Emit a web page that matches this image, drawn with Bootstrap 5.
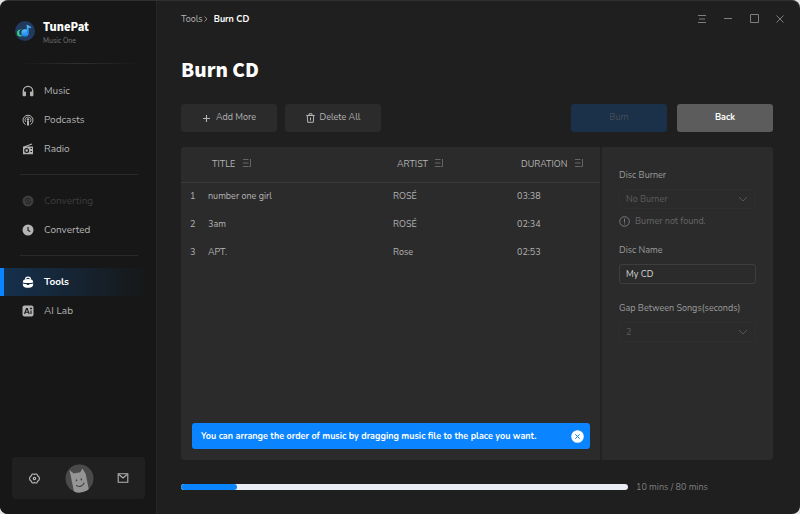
<!DOCTYPE html>
<html lang="en" data-bs-theme="dark">
<head>
<meta charset="utf-8">
<meta name="viewport" content="width=device-width, initial-scale=1">
<title>TunePat Music One</title>
<link rel="stylesheet" href="https://cdn.jsdelivr.net/npm/bootstrap@5.3.0/dist/css/bootstrap.min.css">
<style>
html { background: #e4e4e4; }
body { font-family: "Nunito", "Lato", sans-serif; font-size: 10px; line-height: 16px; color: #b4b4b4; background: transparent; }
.display-face { font-family: "Source Sans Pro", "Noto Sans CJK JP", sans-serif; font-weight: 900; color: #fff; }
.app-window { background: #1f1f1f; border-radius: 8px; overflow: hidden; border-top: 1px solid #303030; }
.side { width: 157px; background: #171717; border-right: 1px solid #262626; }
.brand { padding: 18px 14px 0; height: 62px; gap: 7px; }
.brand-title { font-size: 11px; line-height: 14px; }
.brand-sub { font-size: 7px; line-height: 16px; color: #757575; }
.rule { height: 1px; background: #2a2a2a; margin: 0 18px 0 20px; }
.rule-fade { background: linear-gradient(90deg, #171717, #303030 50%, #171717); }
.menu { gap: 1px; padding: 12px 0 11px; }
.menu-main { padding-top: 13px; }
.menu-link { height: 28px; padding-left: 22px; gap: 10px; color: #b4b4b4; text-decoration: none; }
.menu-link svg { width: 12px; height: 12px; }
.menu-link.off { color: #3d3d3d; }
.menu-link.on { color: #fff; font-weight: 700; background: linear-gradient(90deg, #15304d, #171717 95%); border-left: 4px solid #0a84ff; padding-left: 18px; }
.user-bar { background: #202020; border-radius: 4px; margin: 0 11px 15px 12px; padding: 6px 16px; height: 42px; }
.icon-btn { background: none; border: 0; padding: 0; color: inherit; display: inline-flex; align-items: center; justify-content: center; }
.main-area { font-size: 9px; padding: 10px 27px 19px 24px; min-width: 0; }
.crumbs a { color: #b4b4b4; }
.crumbs svg { margin: 0 6px 0 1px; }
.win-tools { gap: 14px; color: #7e7e7e; margin-right: -13px; }
.win-tools .icon-btn { width: 12px; height: 12px; }
.page-title { font-size: 19px; line-height: 28px; margin: 28px 0 21px; }
.act { width: 96px; height: 28px; padding: 0; border: 0; border-radius: 3px; font-size: 9px; color: #b4b4b4; background: #2b2b2b; gap: 5px; }
.act-burn, .act-burn:disabled { background: #1b3049; color: #484e55; opacity: 1; }
.act-back { background: #5c5c5c; color: #fff; font-weight: 700; margin-left: 10px; }
.panel { background: #2b2b2b; border-radius: 3px; margin-top: 15px; }
.song-side { border-right: 2px solid #222; min-width: 0; }
.songs { table-layout: fixed; width: 100%; }
.songs th { height: 35px; padding: 0 0 0 4px; font-weight: 400; border-bottom: 1px solid #3a3a3a; white-space: nowrap; }
.songs td { height: 28px; padding: 0; }
.songs td:first-child { padding-left: 9px; }
.songs svg { margin-left: 4px; vertical-align: -1px; }
.c-num { width: 27px; } .c-art { width: 124px; } .c-dur { width: 83px; }
.tip { background: #0a84ff; color: #fff; border-radius: 3px; margin: 0 10px 11px 11px; padding: 0 6px 0 9px; height: 26px; font-weight: 700; }
.opts { width: 171px; padding: 20px 17px 20px 17px; }
.opts label { display: block; color: #9c9c9c; white-space: nowrap; }
.field { height: 20px; min-height: 0; padding: 0 6px; margin-top: 6px; font-size: 9px; line-height: 16px; border-radius: 3px; border: 1px solid #3e3e3e; background: transparent; color: #d8d8d8; }
select.field, select.field:disabled { appearance: none; background-color: transparent; background-image: none; color: #5c5c5c; border-color: #2f2f2f; opacity: 1; }
.pick { position: relative; }
.pick svg { position: absolute; right: 8px; top: 7px; }
.note { color: #666; gap: 5px; margin: 4px 0 13px; }
.foot { margin-top: 19px; gap: 8px; color: #7f7f7f; }
.burn-bar { height: 6px; border-radius: 3px; background: #ebedf4; }
.burn-bar .progress-bar { background: #0a84ff; border-radius: 3px; }
.foot-text { width: 137px; }
</style>
<script src="https://cdn.jsdelivr.net/npm/bootstrap@5.3.0/dist/js/bootstrap.bundle.min.js"></script>
</head>
<body>
<svg class="d-none" aria-hidden="true">
  <symbol id="sort" viewBox="0 0 10 10"><path d="M1 1.500h5.500M1 5h5.500M1 8.500h5.500M8.500 1v7.500M7 8.500h1.500" fill="none" stroke="#666"/></symbol>
  <symbol id="chev" viewBox="0 0 10 6"><path d="M1 1l4 4 4-4" fill="none" stroke="#555"/></symbol>
</svg>
<div class="app-window d-flex min-vh-100">
  <aside class="side d-flex flex-column flex-shrink-0">
    <div class="brand d-flex">
      <svg width="22" height="22" viewBox="0 0 22 22" aria-hidden="true"><defs><linearGradient id="g" x2="0" y2="1"><stop stop-color="#5cc8ff"/><stop offset="1" stop-color="#1479e8"/></linearGradient></defs><circle cx="11" cy="12" r="10" fill="#223a5e"/><circle cx="6.500" cy="14" r="3.500" fill="#35d07f"/><circle cx="8.200" cy="13.500" r="3" fill="#223a5e"/><circle cx="11" cy="14" r="3.700" fill="url(#g)"/><path d="M12.700 14V5.500c1.500 1.500 4.500 1 4.600 4-1-1-2-.8-2.600-.8V14z" fill="url(#g)"/></svg>
      <div>
        <div class="brand-title display-face">TunePat</div>
        <div class="brand-sub">Music One</div>
      </div>
    </div>
    <div class="rule rule-fade"></div>
    <nav class="menu menu-main d-flex flex-column">
      <a class="menu-link d-flex align-items-center" href="#"><svg viewBox="0 0 12 12" fill="currentColor"><path d="M1.300 7V6a4.700 4.700 0 0 1 9.400 0v1" fill="none" stroke="currentColor" stroke-width="1.300"/><rect x=".6" y="6.500" width="3.400" height="4.700" rx="1"/><rect x="8" y="6.500" width="3.400" height="4.700" rx="1"/></svg>Music</a>
      <a class="menu-link d-flex align-items-center" href="#"><svg viewBox="0 0 12 12" fill="none" stroke="currentColor"><path d="M3.600 10.600a5 5 0 1 1 4.800 0"/><path d="M3.800 8a3 3 0 1 1 4.400 0" stroke-width=".9"/><circle cx="6" cy="5.500" r="1.200" fill="currentColor" stroke="none"/><path d="M6 7.800v3" stroke-width="2" stroke-linecap="round"/></svg>Podcasts</a>
      <a class="menu-link d-flex align-items-center" href="#"><svg viewBox="0 0 12 12" fill="currentColor"><path d="M2 4l8-3" stroke="currentColor" stroke-width="1.200"/><path fill-rule="evenodd" d="M1 3.500h10v7.700H1zM4.700 5a2.500 2.500 0 1 0 0 5 2.500 2.500 0 0 0 0-5zM8.500 5v1h1.500V5zM8.500 8v1h1.500V8z"/><circle cx="4.700" cy="7.500" r="1.300"/></svg>Radio</a>
    </nav>
    <div class="rule"></div>
    <nav class="menu d-flex flex-column">
      <a class="menu-link off d-flex align-items-center" href="#" aria-disabled="true"><svg viewBox="0 0 12 12"><circle cx="6" cy="6" r="5.500" fill="currentColor"/><path d="M3.500 6a2.500 2.500 0 0 1 4.500-1.500M8.500 6A2.500 2.500 0 0 1 4 7.500" fill="none" stroke="#1c1c1c"/><circle cx="6" cy="6" r=".8" fill="#1c1c1c"/></svg>Converting</a>
      <a class="menu-link d-flex align-items-center" href="#"><svg viewBox="0 0 12 12"><circle cx="6" cy="6" r="5.500" fill="currentColor"/><path d="M6 3v3.400l2.300 1.200" fill="none" stroke="#171717" stroke-width="1.100"/></svg>Converted</a>
    </nav>
    <div class="rule"></div>
    <nav class="menu d-flex flex-column">
      <a class="menu-link on d-flex align-items-center" href="#" aria-current="page"><svg viewBox="0 0 12 12"><path d="M3.500 3.500C3.500 1.500 4.500 1.200 6 1.200s2.500.3 2.500 2.300" fill="none" stroke="currentColor" stroke-width="1.200"/><path d="M.8 6.400C.8 4 2.300 3 6 3s5.200 1 5.200 3.400C9 7.300 3 7.300.8 6.400zM.8 7.500c1.200.5 2.400.6 3.800.6 0 .8.400 1 1.400 1s1.400-.2 1.400-1c1.400 0 2.600-.1 3.800-.6 0 3-1.200 4.200-5.200 4.200S.8 10.500.8 7.500z" fill="currentColor"/></svg>Tools</a>
      <a class="menu-link d-flex align-items-center" href="#"><svg viewBox="0 0 12 12"><rect x=".5" y=".5" width="11" height="11" rx="2" fill="currentColor"/><path d="M2.500 9l2-5.500h.7L7.200 9M3.300 7.300h3M9 5.500V9" fill="none" stroke="#171717" stroke-width="1.100"/><path d="M9 2l.5 1.100 1 .4-1 .4L9 5l-.5-1.100-1-.4 1-.4z" fill="#171717"/></svg>AI Lab</a>
    </nav>
    <div class="user-bar d-flex align-items-center justify-content-between mt-auto">
      <button class="icon-btn" type="button" aria-label="Settings"><svg width="13" height="13" viewBox="0 0 13 13" fill="none" stroke="currentColor" stroke-width="1.200"><path d="M4.300 2h1.200l1 .6 1-.6h1.200l1.100 1.900.9.500.8 2.100-.8 2.100-.9.500L8.700 11H7.500l-1-.6-1 .6H4.300L3.200 9.100l-.9-.5-.8-2.100.8-2.100.9-.5z" stroke-linejoin="round"/><circle cx="6.500" cy="6.500" r="1.200"/></svg></button>
      <button class="icon-btn" type="button" aria-label="Account"><svg width="29" height="29" viewBox="0 0 29 29"><clipPath id="av"><circle cx="14.500" cy="14.500" r="14.200"/></clipPath><g clip-path="url(#av)"><circle cx="14.500" cy="14.500" r="14.200" fill="#4a4a4a"/><path d="M4.500 6l4.200 3.500 6.500-1.300L17.500 4.500l3.200 5.500L24 26.500 9.500 30z" fill="#959595"/><g fill="none" stroke="#454545" stroke-linecap="round"><path d="M11.500 16v.8M16.300 15v.8" stroke-width="1.400"/><path d="M11.500 21.500c3 2 6.500.5 7.500-2.500" stroke-width="1.100"/></g></g></svg></button>
      <button class="icon-btn" type="button" aria-label="Mail"><svg width="12" height="12" viewBox="0 0 12 12" fill="none" stroke="currentColor" stroke-width="1.100"><path d="M1.200 1.700h9.600v8.600H1.200z"/><path d="M2 2.500L6 6l4-3.500"/></svg></button>
    </div>
  </aside>
  <main class="main-area d-flex flex-column flex-grow-1">
    <header class="d-flex align-items-center justify-content-between">
      <nav class="crumbs d-flex align-items-center" aria-label="breadcrumb">
        <a class="text-decoration-none" href="#">Tools</a>
        <svg width="4" height="8" viewBox="0 0 4 8" aria-hidden="true"><path d="M.5 1.500L3 4 .5 6.500" fill="none" stroke="#8a8a8a"/></svg>
        <strong class="text-white" aria-current="page">Burn CD</strong>
      </nav>
      <div class="win-tools d-flex">
        <button class="icon-btn" type="button" aria-label="Menu"><svg width="10" height="10" viewBox="0 0 10 10" stroke="currentColor"><path d="M1 1.500h8M2 5h6M1 8.500h8" fill="none"/></svg></button>
        <button class="icon-btn" type="button" aria-label="Minimize"><svg width="10" height="10" viewBox="0 0 10 10" stroke="currentColor"><path d="M1 4.500h8"/></svg></button>
        <button class="icon-btn" type="button" aria-label="Maximize"><svg width="10" height="10" viewBox="0 0 10 10" stroke="currentColor" fill="none"><path d="M1.500.5h8v8h-8z"/></svg></button>
        <button class="icon-btn" type="button" aria-label="Close"><svg width="10" height="10" viewBox="0 0 10 10" stroke="currentColor"><path d="M1.500 1.500l7 7M8.500 1.500l-7 7"/></svg></button>
      </div>
    </header>
    <h1 class="page-title display-face">Burn CD</h1>
    <div class="d-flex">
      <button class="btn act d-flex align-items-center justify-content-center me-2" type="button"><svg width="9" height="9" viewBox="0 0 9 9" stroke="currentColor" aria-hidden="true"><path d="M4.500 1v7M1 4.500h7" stroke-width="1.100"/></svg>Add More</button>
      <button class="btn act d-flex align-items-center justify-content-center" type="button"><svg width="9" height="10" viewBox="0 0 9 10" fill="none" stroke="currentColor" aria-hidden="true"><path d="M.3 2.500h8.400M1.300 2.500l.4 6.800h5.600l.4-6.800M3 2.300V.8h3v1.500M4.500 4.500v3"/></svg>Delete All</button>
      <button class="btn act act-burn ms-auto" type="button" disabled>Burn</button>
      <button class="btn act act-back" type="button">Back</button>
    </div>
    <section class="panel d-flex flex-grow-1">
      <div class="song-side d-flex flex-column flex-grow-1">
        <table class="songs">
          <thead><tr>
            <th class="c-num"></th>
            <th>TITLE <svg width="10" height="10" aria-hidden="true"><use href="#sort"/></svg></th>
            <th class="c-art">ARTIST <svg width="10" height="10" aria-hidden="true"><use href="#sort"/></svg></th>
            <th class="c-dur">DURATION <svg width="10" height="10" aria-hidden="true"><use href="#sort"/></svg></th>
          </tr></thead>
          <tbody>
            <tr><td>1</td><td>number one girl</td><td>ROSÉ</td><td>03:38</td></tr>
            <tr><td>2</td><td>3am</td><td>ROSÉ</td><td>02:34</td></tr>
            <tr><td>3</td><td>APT.</td><td>Rose</td><td>02:53</td></tr>
          </tbody>
        </table>
        <div class="tip d-flex align-items-center justify-content-between mt-auto">
          <span>You can arrange the order of music by dragging music file to the place you want.</span>
          <button class="icon-btn" type="button" aria-label="Dismiss"><svg width="13" height="13" viewBox="0 0 13 13"><circle cx="6.500" cy="6.500" r="6.300" fill="#fff"/><path d="M4.300 4.300l4.400 4.400M8.700 4.300L4.300 8.700" stroke="#0a84ff"/></svg></button>
        </div>
      </div>
      <form class="opts flex-shrink-0">
        <label for="burner">Disc Burner</label>
        <div class="pick"><select id="burner" class="form-select field" disabled><option>No Burner</option></select><svg width="10" height="6" aria-hidden="true"><use href="#chev"/></svg></div>
        <div class="note d-flex align-items-center"><svg width="11" height="11" viewBox="0 0 11 11" fill="none" stroke="#777" aria-hidden="true"><circle cx="5.500" cy="5.500" r="4.800"/><path d="M5.500 2.500v4M5.500 7.500v1"/></svg>Burner not found.</div>
        <label for="disc">Disc Name</label>
        <input id="disc" class="form-control field" type="text" value="My CD">
        <label class="mt-3" for="gap">Gap Between Songs(seconds)</label>
        <div class="pick"><select id="gap" class="form-select field" disabled><option>2</option></select><svg width="10" height="6" aria-hidden="true"><use href="#chev"/></svg></div>
      </form>
    </section>
    <footer class="foot d-flex align-items-center">
      <div class="progress burn-bar flex-grow-1" role="progressbar" aria-label="Disc capacity used" aria-valuenow="10" aria-valuemin="0" aria-valuemax="80"><div class="progress-bar" style="width:12.5%"></div></div>
      <span class="foot-text">10 mins / 80 mins</span>
    </footer>
  </main>
</div>
</body>
</html>
